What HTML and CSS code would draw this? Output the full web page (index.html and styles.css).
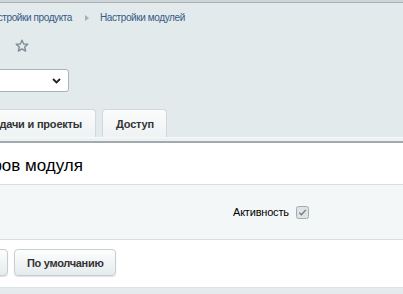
FILE: index.html
```html
<!DOCTYPE html>
<html lang="ru">
<head>
  <meta charset="UTF-8" />
  <title>Настройки модулей</title>
  <link rel="stylesheet" href="styles.css">
</head>
<body>
  <div class="topline"></div>

  <div class="head">
    <div class="crumbs">
      <div class="crumb-cut"><a class="crumb">Настройки продукта</a></div>
      <svg class="arrow" width="4" height="6" viewBox="0 0 4 6"><path d="M0 0 L4 3 L0 6 Z" fill="#a5afb5"/></svg>
      <a class="crumb">Настройки модулей</a>
    </div>
    <div class="title-row">
      <svg class="star" width="14" height="14" viewBox="0 0 14 14">
        <path d="M7 1.2 L8.7 5 L12.8 5.3 L9.7 8 L10.6 12.1 L7 9.9 L3.4 12.1 L4.3 8 L1.2 5.3 L5.3 5 Z" fill="none" stroke="#7d8c97" stroke-width="1.4" stroke-linejoin="round"/>
      </svg>
    </div>
    <div class="select-row">
      <div class="select">
        <svg class="chev" width="9" height="6" viewBox="0 0 9 6"><path d="M1 1 L4.5 4.5 L8 1" fill="none" stroke="#222" stroke-width="1.8"/></svg>
      </div>
    </div>
  </div>

  <div class="tabs">
    <div class="tab first"><span>Задачи и проекты</span></div>
    <div class="tab">Доступ</div>
  </div>
  <div class="tabs-edge"></div>

  <div class="content">
    <div class="form-title"><h1>Настройка параметров модуля</h1></div>
    <div class="field-row">
      <span class="field-label">Активность</span>
      <svg class="check" width="13" height="13" viewBox="0 0 13 13">
        <rect x="0.5" y="0.5" width="12" height="12" rx="2" fill="#dfe3e5" stroke="#a3acb1"/>
        <path d="M3.2 6.6 L5.4 8.8 L9.8 3.9" fill="none" stroke="#6f7a80" stroke-width="1.3"/>
      </svg>
    </div>
    <div class="buttons">
      <button class="btn first">Сохранить</button>
      <button class="btn">По умолчанию</button>
    </div>
  </div>
  <div class="footer"></div>
</body>
</html>
```

FILE: styles.css
```css
* { margin:0; padding:0; box-sizing:border-box; }
body {
  background:#e3eaec; font-family:"Liberation Sans", Arial, sans-serif;
  font-size:11px; color:#000; overflow:hidden; height:294px;
}

.topline { height:3px; background:#cdd5d8; border-bottom:1px solid #a9b2b6; }

/* header: breadcrumbs, star, site select */
.crumbs { display:flex; align-items:center; height:13px; margin-top:8px; }
.crumb-cut { width:72px; display:flex; justify-content:flex-end; white-space:nowrap; }
.crumb { color:#355a85; text-decoration:none; font-size:10px; letter-spacing:-0.4px; white-space:nowrap; }
.arrow { display:block; margin:0 11px 0 13px; }

.title-row { height:14px; margin-top:15px; padding-left:15px; }
.star { display:block; }

.select-row { margin-top:16px; margin-left:-40px; }
.select {
  width:109px; height:23px; background:#fff; border:1px solid #a9b4ba;
  border-radius:3px; display:flex; align-items:center; justify-content:flex-end;
  padding-right:7px;
}

/* tabs */
.tabs { display:flex; gap:6px; margin-top:17px; align-items:flex-end; }
.tab {
  height:28px; padding:0 12px 0 13px; font-weight:bold; font-size:11px; letter-spacing:-0.2px; color:#333;
  background:linear-gradient(#fbfcfc, #eef2f3); border:1px solid #d1d9dc;
  border-bottom:none; border-radius:4px 4px 0 0; display:flex; align-items:center;
}
.tab.first { width:96px; justify-content:flex-end; padding:0 13px 0 0; border-left:none; border-radius:0 4px 0 0; white-space:nowrap; }

.tabs-edge { height:6px; background:#edf1f2; border-top:1px solid #f8fafa; border-bottom:2px solid #a1abaf; }

/* form */
.content { background:#fff; }
.form-title { width:83px; height:41px; padding-top:4px; display:flex; justify-content:flex-end; align-items:center; }
.form-title h1 { font-weight:normal; font-size:17px; white-space:nowrap; color:#000; }

.field-row {
  height:56px; background:#f4f7f8; border-top:1px solid #d7dde0; border-bottom:1px solid #d7dde0;
  display:flex; align-items:center; padding-left:233px; gap:7px;
}
.field-label { font-size:11px; letter-spacing:-0.2px; }
.check { display:block; }

.buttons { display:flex; gap:6px; height:47px; padding-top:9px; margin-left:-72px; }
.btn {
  height:27px; padding:0 11px 0 12px; border:1px solid #c6ced2; border-radius:4px;
  background:linear-gradient(#fdfefe, #e5ebed); font:bold 11px "Liberation Sans", Arial, sans-serif;
  letter-spacing:-0.3px; color:#333; box-shadow:0 1px 1px rgba(0,0,0,0.12); white-space:nowrap;
}
.btn.first { width:80px; }

.footer { height:6px; background:#e6ecee; border-top:1px solid #dce3e5; }
```
